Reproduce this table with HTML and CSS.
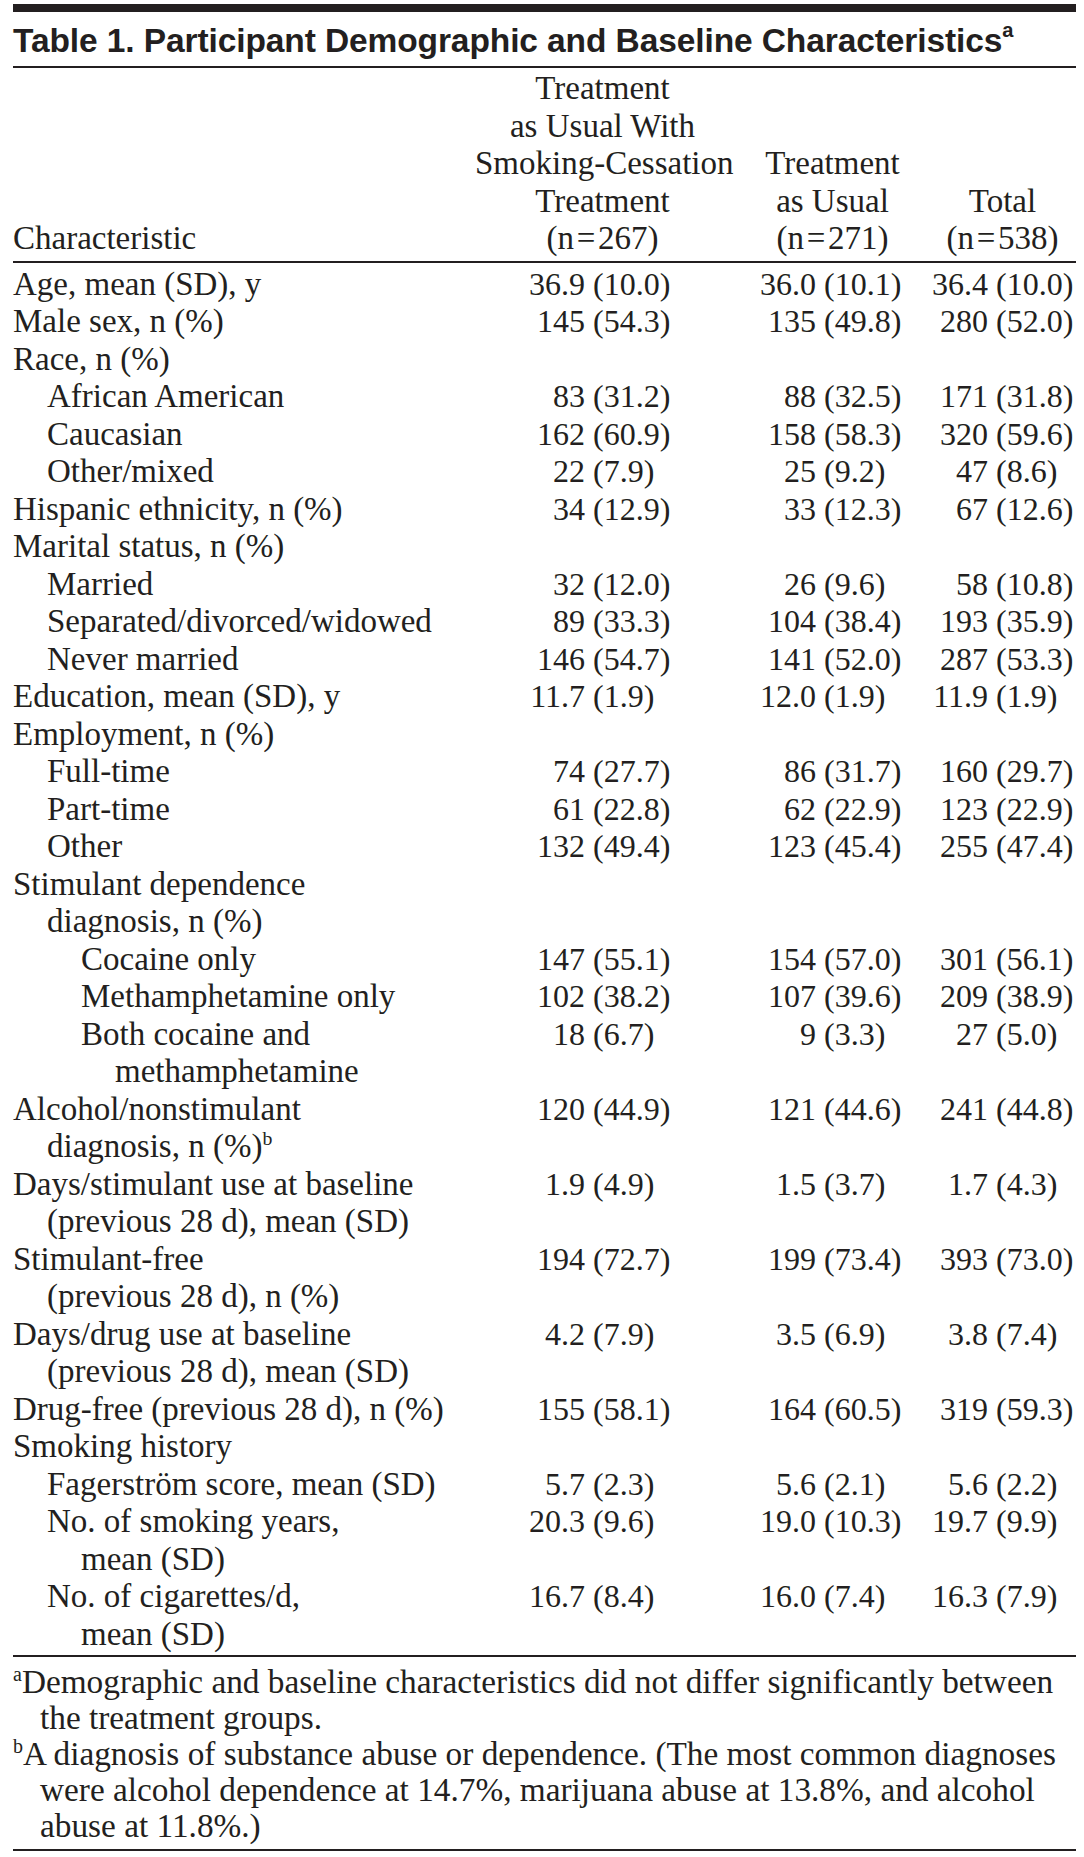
FILE: index.html
```html
<!DOCTYPE html>
<html lang="en">
<head>
<meta charset="utf-8">
<title>Table 1</title>
<link rel="stylesheet" href="styles.css">
</head>
<body>
<div class="page">
  <div class="topbar"></div>
  <h1 class="title">Table 1. Participant Demographic and Baseline Characteristics<sup class="sup">a</sup></h1>

  <div class="grid head">
    <div class="h-label">Characteristic</div>
    <div class="h-col c1">Treatment<br>as Usual With<br>Smoking-Cessation<br>Treatment<br>(n&#8202;=&#8202;267)</div>
    <div class="h-col c2">Treatment<br>as Usual<br>(n&#8202;=&#8202;271)</div>
    <div class="h-col c3">Total<br>(n&#8202;=&#8202;538)</div>
  </div>

  <div class="body">
    <div class="grid row"><div class="label l0">Age, mean (SD), y</div>
      <div class="cell c1"><span class="n">36.9</span><span class="p">(10.0)</span></div>
      <div class="cell c2"><span class="n">36.0</span><span class="p">(10.1)</span></div>
      <div class="cell c3"><span class="n">36.4</span><span class="p">(10.0)</span></div></div>
    <div class="grid row"><div class="label l0">Male sex, n (%)</div>
      <div class="cell c1"><span class="n">145</span><span class="p">(54.3)</span></div>
      <div class="cell c2"><span class="n">135</span><span class="p">(49.8)</span></div>
      <div class="cell c3"><span class="n">280</span><span class="p">(52.0)</span></div></div>
    <div class="grid row"><div class="label l0">Race, n (%)</div></div>
    <div class="grid row"><div class="label l1">African American</div>
      <div class="cell c1"><span class="n">83</span><span class="p">(31.2)</span></div>
      <div class="cell c2"><span class="n">88</span><span class="p">(32.5)</span></div>
      <div class="cell c3"><span class="n">171</span><span class="p">(31.8)</span></div></div>
    <div class="grid row"><div class="label l1">Caucasian</div>
      <div class="cell c1"><span class="n">162</span><span class="p">(60.9)</span></div>
      <div class="cell c2"><span class="n">158</span><span class="p">(58.3)</span></div>
      <div class="cell c3"><span class="n">320</span><span class="p">(59.6)</span></div></div>
    <div class="grid row"><div class="label l1">Other/mixed</div>
      <div class="cell c1"><span class="n">22</span><span class="p">(7.9)</span></div>
      <div class="cell c2"><span class="n">25</span><span class="p">(9.2)</span></div>
      <div class="cell c3"><span class="n">47</span><span class="p">(8.6)</span></div></div>
    <div class="grid row"><div class="label l0">Hispanic ethnicity, n (%)</div>
      <div class="cell c1"><span class="n">34</span><span class="p">(12.9)</span></div>
      <div class="cell c2"><span class="n">33</span><span class="p">(12.3)</span></div>
      <div class="cell c3"><span class="n">67</span><span class="p">(12.6)</span></div></div>
    <div class="grid row"><div class="label l0">Marital status, n (%)</div></div>
    <div class="grid row"><div class="label l1">Married</div>
      <div class="cell c1"><span class="n">32</span><span class="p">(12.0)</span></div>
      <div class="cell c2"><span class="n">26</span><span class="p">(9.6)</span></div>
      <div class="cell c3"><span class="n">58</span><span class="p">(10.8)</span></div></div>
    <div class="grid row"><div class="label l1">Separated/divorced/widowed</div>
      <div class="cell c1"><span class="n">89</span><span class="p">(33.3)</span></div>
      <div class="cell c2"><span class="n">104</span><span class="p">(38.4)</span></div>
      <div class="cell c3"><span class="n">193</span><span class="p">(35.9)</span></div></div>
    <div class="grid row"><div class="label l1">Never married</div>
      <div class="cell c1"><span class="n">146</span><span class="p">(54.7)</span></div>
      <div class="cell c2"><span class="n">141</span><span class="p">(52.0)</span></div>
      <div class="cell c3"><span class="n">287</span><span class="p">(53.3)</span></div></div>
    <div class="grid row"><div class="label l0">Education, mean (SD), y</div>
      <div class="cell c1"><span class="n">11.7</span><span class="p">(1.9)</span></div>
      <div class="cell c2"><span class="n">12.0</span><span class="p">(1.9)</span></div>
      <div class="cell c3"><span class="n">11.9</span><span class="p">(1.9)</span></div></div>
    <div class="grid row"><div class="label l0">Employment, n (%)</div></div>
    <div class="grid row"><div class="label l1">Full-time</div>
      <div class="cell c1"><span class="n">74</span><span class="p">(27.7)</span></div>
      <div class="cell c2"><span class="n">86</span><span class="p">(31.7)</span></div>
      <div class="cell c3"><span class="n">160</span><span class="p">(29.7)</span></div></div>
    <div class="grid row"><div class="label l1">Part-time</div>
      <div class="cell c1"><span class="n">61</span><span class="p">(22.8)</span></div>
      <div class="cell c2"><span class="n">62</span><span class="p">(22.9)</span></div>
      <div class="cell c3"><span class="n">123</span><span class="p">(22.9)</span></div></div>
    <div class="grid row"><div class="label l1">Other</div>
      <div class="cell c1"><span class="n">132</span><span class="p">(49.4)</span></div>
      <div class="cell c2"><span class="n">123</span><span class="p">(45.4)</span></div>
      <div class="cell c3"><span class="n">255</span><span class="p">(47.4)</span></div></div>
    <div class="grid row"><div class="label l0">Stimulant dependence<br>diagnosis, n (%)</div></div>
    <div class="grid row"><div class="label l2">Cocaine only</div>
      <div class="cell c1"><span class="n">147</span><span class="p">(55.1)</span></div>
      <div class="cell c2"><span class="n">154</span><span class="p">(57.0)</span></div>
      <div class="cell c3"><span class="n">301</span><span class="p">(56.1)</span></div></div>
    <div class="grid row"><div class="label l2">Methamphetamine only</div>
      <div class="cell c1"><span class="n">102</span><span class="p">(38.2)</span></div>
      <div class="cell c2"><span class="n">107</span><span class="p">(39.6)</span></div>
      <div class="cell c3"><span class="n">209</span><span class="p">(38.9)</span></div></div>
    <div class="grid row"><div class="label l2">Both cocaine and<br>methamphetamine</div>
      <div class="cell c1"><span class="n">18</span><span class="p">(6.7)</span></div>
      <div class="cell c2"><span class="n">9</span><span class="p">(3.3)</span></div>
      <div class="cell c3"><span class="n">27</span><span class="p">(5.0)</span></div></div>
    <div class="grid row"><div class="label l0">Alcohol/nonstimulant<br>diagnosis, n (%)<sup class="sup">b</sup></div>
      <div class="cell c1"><span class="n">120</span><span class="p">(44.9)</span></div>
      <div class="cell c2"><span class="n">121</span><span class="p">(44.6)</span></div>
      <div class="cell c3"><span class="n">241</span><span class="p">(44.8)</span></div></div>
    <div class="grid row"><div class="label l0">Days/stimulant use at baseline<br>(previous 28 d), mean (SD)</div>
      <div class="cell c1"><span class="n">1.9</span><span class="p">(4.9)</span></div>
      <div class="cell c2"><span class="n">1.5</span><span class="p">(3.7)</span></div>
      <div class="cell c3"><span class="n">1.7</span><span class="p">(4.3)</span></div></div>
    <div class="grid row"><div class="label l0">Stimulant-free<br>(previous 28 d), n (%)</div>
      <div class="cell c1"><span class="n">194</span><span class="p">(72.7)</span></div>
      <div class="cell c2"><span class="n">199</span><span class="p">(73.4)</span></div>
      <div class="cell c3"><span class="n">393</span><span class="p">(73.0)</span></div></div>
    <div class="grid row"><div class="label l0">Days/drug use at baseline<br>(previous 28 d), mean (SD)</div>
      <div class="cell c1"><span class="n">4.2</span><span class="p">(7.9)</span></div>
      <div class="cell c2"><span class="n">3.5</span><span class="p">(6.9)</span></div>
      <div class="cell c3"><span class="n">3.8</span><span class="p">(7.4)</span></div></div>
    <div class="grid row"><div class="label l0">Drug-free (previous 28 d), n (%)</div>
      <div class="cell c1"><span class="n">155</span><span class="p">(58.1)</span></div>
      <div class="cell c2"><span class="n">164</span><span class="p">(60.5)</span></div>
      <div class="cell c3"><span class="n">319</span><span class="p">(59.3)</span></div></div>
    <div class="grid row"><div class="label l0">Smoking history</div></div>
    <div class="grid row"><div class="label l1">Fagerström score, mean (SD)</div>
      <div class="cell c1"><span class="n">5.7</span><span class="p">(2.3)</span></div>
      <div class="cell c2"><span class="n">5.6</span><span class="p">(2.1)</span></div>
      <div class="cell c3"><span class="n">5.6</span><span class="p">(2.2)</span></div></div>
    <div class="grid row"><div class="label l1">No. of smoking years,<br>mean (SD)</div>
      <div class="cell c1"><span class="n">20.3</span><span class="p">(9.6)</span></div>
      <div class="cell c2"><span class="n">19.0</span><span class="p">(10.3)</span></div>
      <div class="cell c3"><span class="n">19.7</span><span class="p">(9.9)</span></div></div>
    <div class="grid row"><div class="label l1">No. of cigarettes/d,<br>mean (SD)</div>
      <div class="cell c1"><span class="n">16.7</span><span class="p">(8.4)</span></div>
      <div class="cell c2"><span class="n">16.0</span><span class="p">(7.4)</span></div>
      <div class="cell c3"><span class="n">16.3</span><span class="p">(7.9)</span></div></div>
  </div>

  <div class="notes">
    <p class="note"><sup class="sup">a</sup>Demographic and baseline characteristics did not differ significantly between<br>the treatment groups.</p>
    <p class="note"><sup class="sup">b</sup>A diagnosis of substance abuse or dependence. (The most common diagnoses<br>were alcohol dependence at 14.7%, marijuana abuse at 13.8%, and alcohol<br>abuse at 11.8%.)</p>
  </div>
</div>
</body>
</html>
```

FILE: styles.css
```css
html, body {
  margin: 0;
  padding: 0;
  background: #ffffff;
}

body {
  color: #231f20;
  font-family: "Liberation Serif", "Times New Roman", serif;
  font-size: 33px;
  line-height: 37.5px;
}

.page {
  width: 1063px;
  padding-left: 13px;
  padding-top: 4px;
}

.topbar {
  height: 8px;
  background: #231f20;
}

.title {
  margin: 0;
  padding-top: 4px;
  height: 50px;
  line-height: 50px;
  font-family: "Liberation Sans", Arial, sans-serif;
  font-weight: bold;
  font-size: 33.5px;
  letter-spacing: -0.1px;
  white-space: nowrap;
  border-bottom: 2px solid #231f20;
}

.sup {
  font-size: 0.6em;
  line-height: 0;
  vertical-align: 0.62em;
  font-weight: normal;
}

.title .sup {
  font-size: 0.6em;
  font-weight: bold;
  vertical-align: 0.75em;
}

.grid {
  display: grid;
  grid-template-columns: 462px 255px 190px 156px;
}

.head {
  align-items: end;
  padding-top: 2px;
  padding-bottom: 3px;
  border-bottom: 2px solid #231f20;
}

.h-col {
  text-align: center;
  white-space: nowrap;
}

.c1 { grid-column: 2; }
.c2 { grid-column: 3; padding-left: 15px; }
.c3 { grid-column: 4; padding-left: 9px; }

.body {
  padding-top: 3px;
  padding-bottom: 2px;
  border-bottom: 2px solid #231f20;
}

.row {
  align-items: start;
}

.label {
  grid-column: 1;
  white-space: nowrap;
  text-indent: -34px;
}

.l0 { padding-left: 34px; }
.l1 { padding-left: 68px; }
.l2 { padding-left: 102px; }

.cell {
  display: flex;
  white-space: nowrap;
  font-size: 32px;
}

.cell .n {
  text-align: right;
  flex: none;
}

.c1 .n { width: 110px; }
.c2 .n { width: 71px; }
.c3 .n { width: 59px; }

.cell .p {
  margin-left: 8px;
}

.notes {
  padding-top: 7px;
  padding-bottom: 5px;
  border-bottom: 2px solid #231f20;
}

.note {
  margin: 0;
  font-size: 33.3px;
  line-height: 36px;
  white-space: nowrap;
  padding-left: 27px;
  text-indent: -27px;
}
```
